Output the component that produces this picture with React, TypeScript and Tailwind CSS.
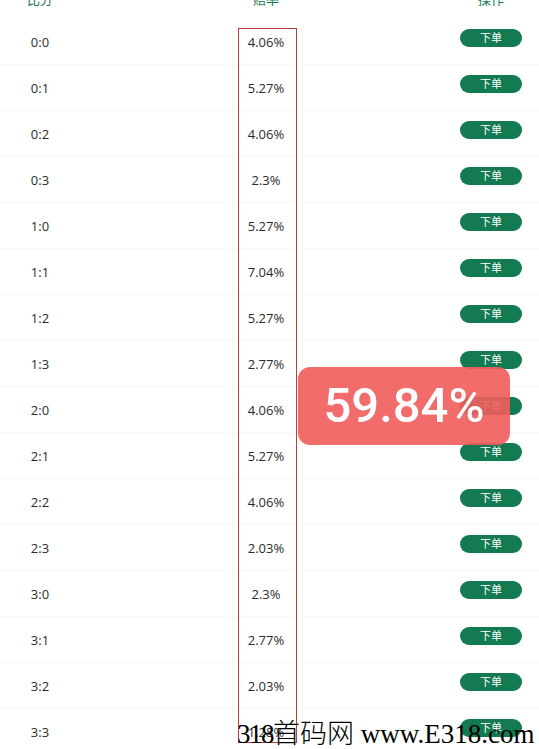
const rows: [string, string][] = [
  ['0:0', '4.06%'],
  ['0:1', '5.27%'],
  ['0:2', '4.06%'],
  ['0:3', '2.3%'],
  ['1:0', '5.27%'],
  ['1:1', '7.04%'],
  ['1:2', '5.27%'],
  ['1:3', '2.77%'],
  ['2:0', '4.06%'],
  ['2:1', '5.27%'],
  ['2:2', '4.06%'],
  ['2:3', '2.03%'],
  ['3:0', '2.3%'],
  ['3:1', '2.77%'],
  ['3:2', '2.03%'],
  ['3:3', '1.28%'],
];

export default function App() {
  return (
    <div
      className="relative w-[539px] h-[749px] overflow-hidden bg-white text-[13px] text-[#2b2b2b]"
      style={{ fontFamily: '"Open Sans", "Noto Sans CJK SC", sans-serif' }}
    >
      <div className="-mt-[19px]">
        <div className="grid grid-cols-[80px_372px_78px] h-[38px] items-center text-[#177a4f]">
          <div className="text-center">比分</div>
          <div className="text-center">赔率</div>
          <div className="text-center">操作</div>
        </div>

        {rows.map(([score, odds]) => (
          <div
            key={score}
            className="grid grid-cols-[80px_372px_78px] h-[46px] border-b border-[#f8f8f8]"
          >
            <div className="text-center leading-[46px]">{score}</div>
            <div className="text-center leading-[46px]">{odds}</div>
            <div className="flex justify-center pt-[10px]">
              <button className="w-[62px] h-[18px] rounded-full bg-[#137a52] text-white text-[11px] leading-[18px]">
                下单
              </button>
            </div>
          </div>
        ))}
      </div>

      {/* red annotation box around odds column */}
      <div className="absolute left-[238px] top-[28px] w-[59px] h-[715px] border border-[#b9403a]" />

      {/* total badge */}
      <div className="absolute left-[298px] top-[367px] w-[212px] h-[78px] rounded-[12px] bg-[#f25c5c]/90 flex items-center justify-center">
        <span
          className="text-white text-[49px] font-medium"
          style={{ fontFamily: 'Roboto, "Liberation Sans", sans-serif' }}
        >
          59.84%
        </span>
      </div>

      {/* watermark */}
      <div className="absolute left-[237px] top-[716px] whitespace-nowrap text-black text-[27px] leading-[32px]">
        <span
          className="tracking-[-1.5px]"
          style={{ fontFamily: '"Liberation Serif", serif' }}
        >
          318
        </span>
        <span style={{ fontFamily: '"Noto Sans CJK SC", sans-serif' }} className="font-light">
          首码网
        </span>
        <span
          className="tracking-[0px]"
          style={{ fontFamily: '"Liberation Serif", serif' }}
        >
          {' www.E318.com'}
        </span>
      </div>
    </div>
  );
}
